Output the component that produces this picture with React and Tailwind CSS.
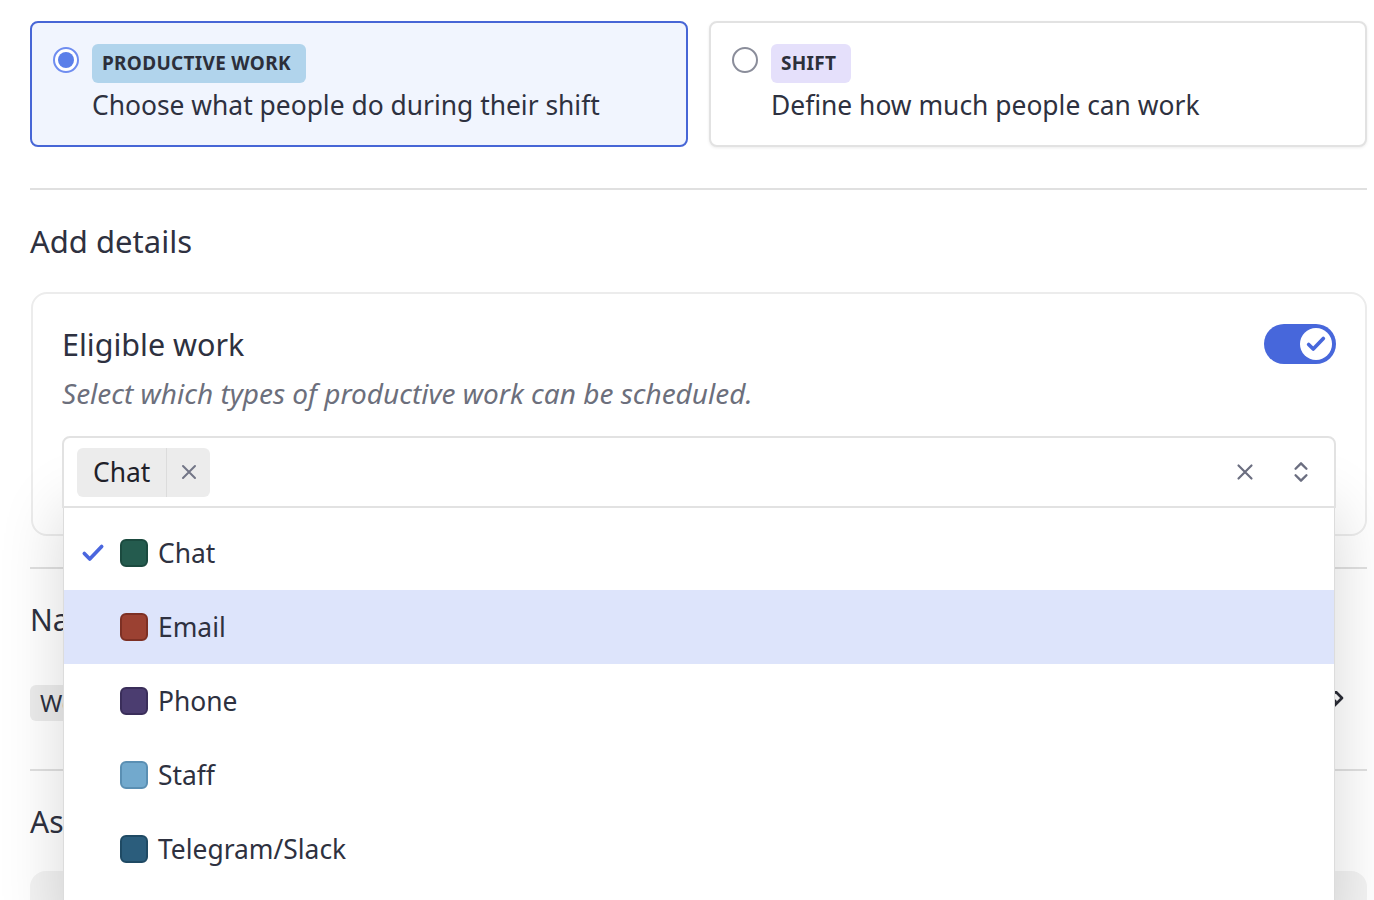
import React from 'react'

const OPTIONS = [
  { label: 'Chat', fill: 'bg-[#245b4e]', ring: 'border-[#1b4a3f]', selected: true },
  { label: 'Email', fill: 'bg-[#9b4132]', ring: 'border-[#7d3024]', active: true },
  { label: 'Phone', fill: 'bg-[#4b3d70]', ring: 'border-[#3a2e5a]' },
  { label: 'Staff', fill: 'bg-[#72a9cd]', ring: 'border-[#5a8fb3]' },
  { label: 'Telegram/Slack', fill: 'bg-[#2b5d7c]', ring: 'border-[#1f4a64]' },
]

function Radio({ checked }) {
  if (checked) {
    return (
      <span className="mt-[3px] flex h-[26px] w-[26px] shrink-0 items-center justify-center rounded-full border-2 border-[#6f8df0] bg-white">
        <span className="h-[16px] w-[16px] rounded-full bg-[#5b7fe9]" />
      </span>
    )
  }
  return <span className="mt-[3px] h-[26px] w-[26px] shrink-0 rounded-full border-2 border-[#8a8d9a] bg-white" />
}

function TypeCard({ checked, badge, badgeBg, text }) {
  return (
    <div
      className={
        checked
          ? 'flex gap-[13px] rounded-[8px] border-2 border-[#4766d6] bg-[#f1f5fe] pl-[21px] pt-[21px] pb-[23px]'
          : 'flex gap-[13px] rounded-[8px] border-2 border-[#e2e2e2] bg-white pl-[21px] pt-[21px] pb-[23px] shadow-[0_1px_3px_rgba(0,0,0,0.08)]'
      }
    >
      <Radio checked={checked} />
      <div className="flex flex-col items-start">
        <span className={`rounded-[6px] pl-[10px] pr-[15px] text-[19px] font-bold leading-[39px] tracking-[0.3px] text-[#2c2f3a] ${badgeBg}`}>
          {badge}
        </span>
        <span className="mt-[5px] text-[26.4px] leading-[34px] text-[#2e3140]">{text}</span>
      </div>
    </div>
  )
}

function Check({ className, width = 3.2 }) {
  return (
    <svg viewBox="0 0 24 24" className={className} fill="none" stroke="currentColor" strokeWidth={width} strokeLinecap="round" strokeLinejoin="round">
      <path d="M4 12.5l5 5L20 6" />
    </svg>
  )
}

export default function App() {
  return (
    <div className="h-[900px] overflow-hidden bg-white pl-[30px] pr-[7px] pt-[21px] font-['Noto_Sans',sans-serif] text-[#2e3140]">
      <div className="grid grid-cols-2 gap-[21px]">
        <TypeCard checked badge="PRODUCTIVE WORK" badgeBg="bg-[#b1d4ec]" text="Choose what people do during their shift" />
        <TypeCard badge="SHIFT" badgeBg="bg-[#e5e0fb]" text="Define how much people can work" />
      </div>

      <div className="mt-[41px] h-[2px] bg-[#e0e0e0]" />

      <h2 className="mt-[32px] text-[31px] leading-[38px]">Add details</h2>

      <div className="ml-px mt-[32px] rounded-[16px] border-2 border-[#ececec] px-[29px] pb-[26px] pt-[30px]">
        <div className="flex items-center justify-between">
          <h3 className="text-[30.5px] leading-[40px]">Eligible work</h3>
          <span className="flex h-[40px] w-[72px] items-center justify-end rounded-full bg-[#4767db] pr-[4px]">
            <span className="flex h-[32px] w-[32px] items-center justify-center rounded-full bg-white text-[#4767db]">
              <Check className="h-[22px] w-[22px]" width={4} />
            </span>
          </span>
        </div>
        <p className="mt-[12px] text-[28px] italic leading-[34px] text-[#6c6f7c]">
          Select which types of productive work can be scheduled.
        </p>

        <div className="relative mt-[26px]">
          <div className="relative z-20 flex h-[72px] items-center rounded-t-[8px] border-2 border-[#e2e2e2] bg-white pl-[13px] pr-[20px]">
            <span className="flex h-[49px] items-center rounded-[6px] bg-[#ececec]">
              <span className="px-[16px] text-[26.4px] leading-[34px] text-[#1f2129]">Chat</span>
              <span className="flex h-full w-[44px] items-center justify-center border-l border-[#dcdcdc] text-[#737687]">
                <svg viewBox="0 0 24 24" className="h-[24px] w-[24px]" fill="none" stroke="currentColor" strokeWidth="2" strokeLinecap="round">
                  <path d="M6 6l12 12M18 6L6 18" />
                </svg>
              </span>
            </span>
            <span className="ml-auto flex items-center gap-[30px] text-[#6b6e80]">
              <svg viewBox="0 0 24 24" className="h-[26px] w-[26px]" fill="none" stroke="currentColor" strokeWidth="2" strokeLinecap="round">
                <path d="M6 6l12 12M18 6L6 18" />
              </svg>
              <svg viewBox="0 0 24 24" className="h-[34px] w-[26px]" fill="none" stroke="currentColor" strokeWidth="2.2" strokeLinecap="round" strokeLinejoin="round">
                <path d="M7 9l5-5 5 5M7 15l5 5 5-5" />
              </svg>
            </span>
          </div>

          <div className="absolute left-[1px] right-[1px] top-full z-10 h-[430px] border-x border-[#dcdcdc] bg-white pt-[8px] shadow-[0_0_60px_rgba(0,0,0,0.16)]">
            {OPTIONS.map((o) => (
              <div key={o.label} className={`flex h-[74px] items-center ${o.active ? 'bg-[#dde4fb]' : ''}`}>
                <span className="flex w-[56px] justify-end pr-[14px] text-[#4a66de]">
                  {o.selected && <Check className="h-[26px] w-[26px]" width={3.4} />}
                </span>
                <span className={`h-[28px] w-[28px] rounded-[6px] border-2 ${o.fill} ${o.ring}`} />
                <span className="ml-[10px] text-[26.4px] leading-[34px] text-[#2e3140]">{o.label}</span>
              </div>
            ))}
          </div>
        </div>
      </div>

      <div className="mt-[31px] h-[2px] bg-[#e0e0e0]" />
      <h3 className="mt-[32px] text-[30px] leading-[38px]">Name</h3>
      <div className="mt-[46px] flex items-center justify-between">
        <span className="rounded-[6px] bg-[#ececec] px-[10px] text-[24px] leading-[36px]">Workday</span>
        <svg viewBox="0 0 24 24" className="mr-[18px] h-[24px] w-[24px] text-[#2a2c36]" fill="none" stroke="currentColor" strokeWidth="2.6" strokeLinejoin="round">
          <path d="M5 5l6-4 6 6-8 8M5 5l6 6" />
        </svg>
      </div>
      <div className="mt-[48px] h-[2px] bg-[#e0e0e0]" />
      <h3 className="mt-[32px] text-[30px] leading-[38px]">Assigned to</h3>
      <div className="mt-[30px] h-[80px] rounded-[16px] bg-[#f3f3f3]" />
    </div>
  )
}
